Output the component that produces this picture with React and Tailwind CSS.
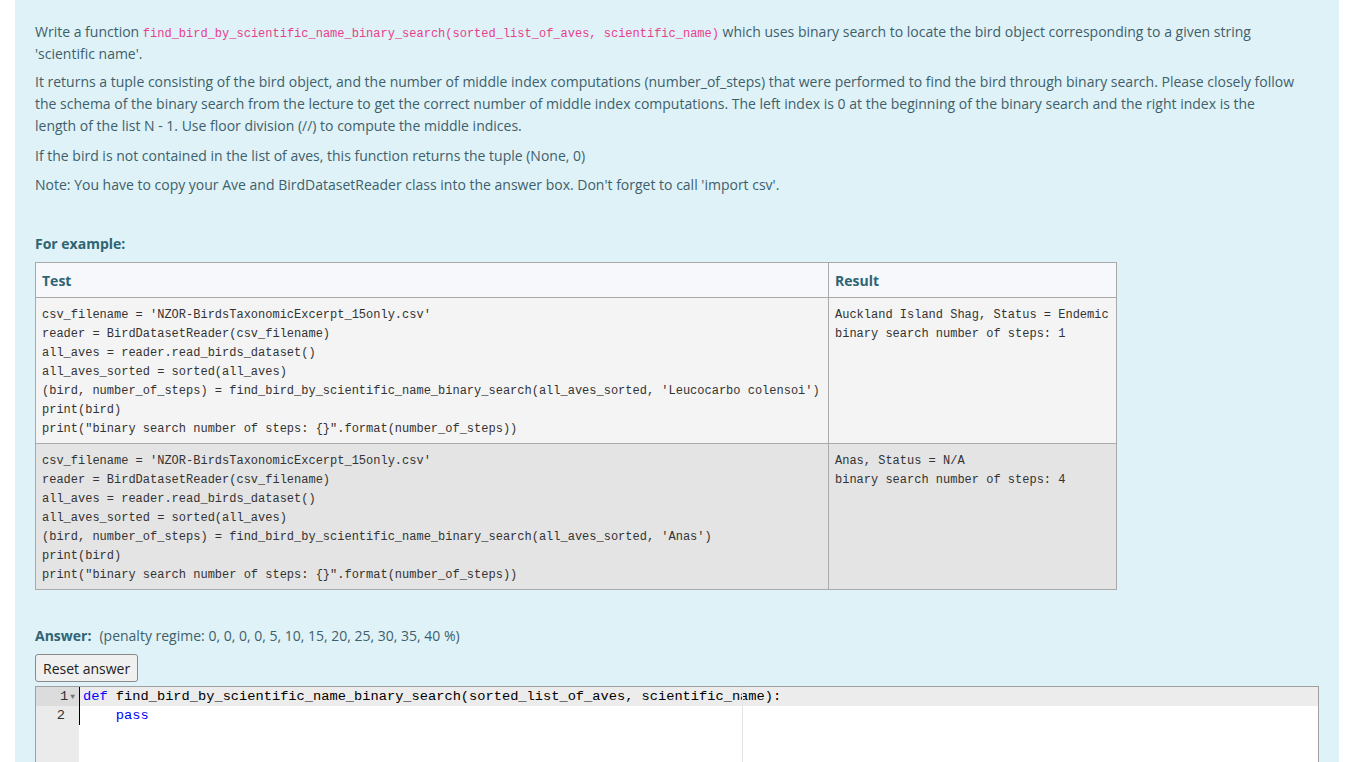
import React from "react";

const body = { fontFamily: '"Open Sans", "Noto Sans", sans-serif' };
const mono = { fontFamily: '"Liberation Mono", "DejaVu Sans Mono", monospace' };

const rows = [
  {
    name: "'Leucocarbo colensoi'",
    result: ["Auckland Island Shag, Status = Endemic", "binary search number of steps: 1"],
    bg: "bg-[#f4f4f4]",
  },
  {
    name: "'Anas'",
    result: ["Anas, Status = N/A", "binary search number of steps: 4"],
    bg: "bg-[#e4e4e4]",
  },
];

const testLines = (name) => [
  "csv_filename = 'NZOR-BirdsTaxonomicExcerpt_15only.csv'",
  "reader = BirdDatasetReader(csv_filename)",
  "all_aves = reader.read_birds_dataset()",
  "all_aves_sorted = sorted(all_aves)",
  `(bird, number_of_steps) = find_bird_by_scientific_name_binary_search(all_aves_sorted, ${name})`,
  "print(bird)",
  'print("binary search number of steps: {}".format(number_of_steps))',
];

export default function App() {
  return (
    <div className="h-[762px] overflow-hidden bg-white pl-[15px] pr-[12px]" style={body}>
      <div className="bg-[#def2f8] text-[#3e5f6b] text-[14px] px-5 pt-[21px] pb-4 min-h-[762px]">
        {/* Question text */}
        <div className="max-w-[1262px]">
          <p className="leading-[22px] mb-[6px]">
            Write a function{" "}
            <code className="text-[#e83e8c] text-[12px] leading-none" style={mono}>
              find_bird_by_scientific_name_binary_search(sorted_list_of_aves, scientific_name)
            </code>{" "}
            which uses binary search to locate the bird object corresponding to a given string
            'scientific name'.
          </p>
          <p className="leading-[22px] mb-[8px]">
            It returns a tuple consisting of the bird object, and the number of middle index
            computations (number_of_steps) that were performed to find the bird through binary
            search. Please closely follow the schema of the binary search from the lecture to get the
            correct number of middle index computations. The left index is 0 at the beginning of the
            binary search and the right index is the length of the list N - 1. Use floor division (//)
            to compute the middle indices.
          </p>
          <p className="leading-[22px] mb-[7px]">
            If the bird is not contained in the list of aves, this function returns the tuple (None, 0)
          </p>
          <p className="leading-[22px]">
            Note: You have to copy your Ave and BirdDatasetReader class into the answer box. Don't
            forget to call 'import csv'.
          </p>
        </div>

        {/* Examples */}
        <h4 className="font-bold text-[#2f6473] mt-[37px] leading-[22px]">For example:</h4>
        <table className="mt-[7px] w-[1082px] border-collapse border border-[#aaaaaa]">
          <thead>
            <tr className="bg-[#f6f8fc] text-[#2f6473] font-bold text-left">
              <th className="border border-[#aaaaaa] px-[6px] h-[35px] w-[793px]">Test</th>
              <th className="border border-[#aaaaaa] px-[6px] h-[35px]">Result</th>
            </tr>
          </thead>
          <tbody>
            {rows.map((r) => (
              <tr key={r.name} className={r.bg}>
                <td className="border border-[#aaaaaa] px-[6px] pt-[8px] pb-[4px] align-top">
                  {testLines(r.name).map((l) => (
                    <div key={l} className="text-[12px] leading-[19px] text-[#333] whitespace-pre" style={mono}>
                      {l}
                    </div>
                  ))}
                </td>
                <td className="border border-[#aaaaaa] px-[6px] pt-[8px] pb-[4px] align-top">
                  {r.result.map((l) => (
                    <div key={l} className="text-[12px] leading-[19px] text-[#333] whitespace-pre" style={mono}>
                      {l}
                    </div>
                  ))}
                </td>
              </tr>
            ))}
          </tbody>
        </table>

        {/* Answer */}
        <div className="mt-[35px] leading-[22px]">
          <span className="font-bold text-[#2f6473]">Answer:</span>
          <span className="ml-2">(penalty regime: 0, 0, 0, 0, 5, 10, 15, 20, 25, 30, 35, 40 %)</span>
        </div>
        <button className="mt-[7px] h-[28px] px-[7px] border border-[#8a8a8a] rounded-[3px] bg-[#f0f0f0] text-[#222] text-[14px]">
          Reset answer
        </button>
        <div className="mt-[4px] flex border border-[#a0a0a0] bg-white h-[120px]">
          <div className="w-[43px] bg-[#ebebeb] text-[#333] text-[13.7px] leading-[19px] shrink-0" style={mono}>
            <div className="flex justify-end items-center pr-[4px] bg-[#dcdcdc] h-[19px]">
              1<span className="text-[8px] text-[#777] ml-[2px]">▼</span>
            </div>
            <div className="text-right pr-[14px] h-[19px]">2</div>
          </div>
          <div className="relative flex-1 text-[13.7px] leading-[19px] text-black border-l border-black h-[38px]" style={mono}>
            <div className="absolute top-0 bottom-[-82px] left-[662px] border-l border-[#e4e4e4]" />
            <div className="bg-[#ececec] pl-[3px] whitespace-pre h-[19px]">
              <span className="text-[#0000ff]">def</span> find_bird_by_scientific_name_binary_search(sorted_list_of_aves, scientific_name):
            </div>
            <div className="pl-[3px] whitespace-pre h-[19px]">
              {"    "}<span className="text-[#0000ff]">pass</span>
            </div>
          </div>
        </div>
      </div>
    </div>
  );
}
